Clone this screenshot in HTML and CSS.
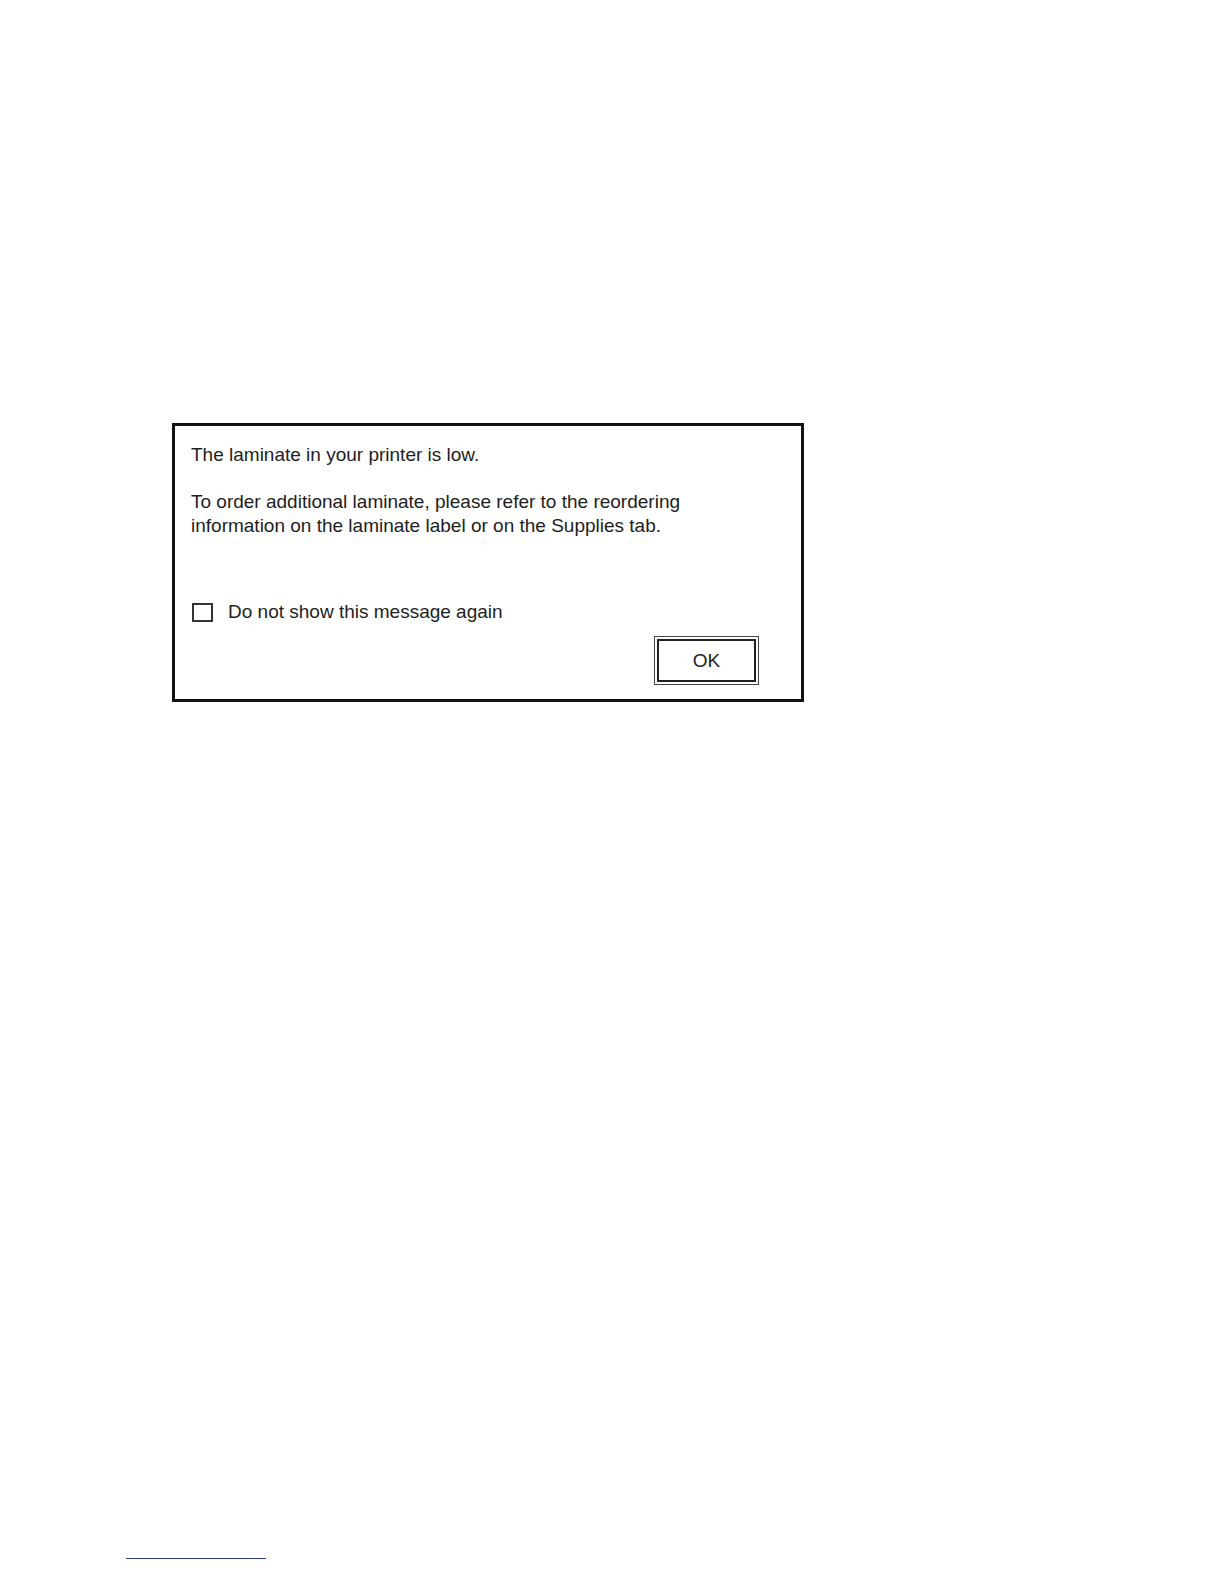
FILE: index.html
```html
<!DOCTYPE html>
<html>
<head>
<meta charset="utf-8">
<link rel="stylesheet" href="styles.css">
</head>
<body>
<div class="dialog">
  <p class="msg">The laminate in your printer is low.</p>
  <p class="msg second">To order additional laminate, please refer to the reordering<br>information on the laminate label or on the Supplies tab.</p>
  <div class="check-row">
    <span class="checkbox"></span>
    <span class="check-label">Do not show this message again</span>
  </div>
  <div class="btn-row">
    <div class="ok-btn"><div class="ok-inner">OK</div></div>
  </div>
</div>
<div class="footer-line"></div>
</body>
</html>
```

FILE: styles.css
```css
html, body {
  margin: 0;
  padding: 0;
  background: #ffffff;
}
body {
  font-family: "Liberation Sans", Arial, sans-serif;
  color: #1e1e1e;
  padding-top: 423px;
}
.dialog {
  margin-left: 172px;
  width: 626px;
  height: 273px;
  border: 3px solid #111;
  box-sizing: content-box;
  display: flex;
  flex-direction: column;
}
.msg {
  margin: 0;
  padding-left: 16px;
  font-size: 19px;
  line-height: 24px;
}
.msg:first-child {
  margin-top: 17px;
}
.second {
  margin-top: 23px;
}
.check-row {
  margin-top: 62px;
  display: flex;
  align-items: center;
  height: 24px;
  padding-left: 17px;
}
.checkbox {
  width: 17px;
  height: 15px;
  border: 2px solid #333;
  display: inline-block;
}
.check-label {
  margin-left: 15px;
  font-size: 19px;
  line-height: 24px;
}
.btn-row {
  display: flex;
  justify-content: flex-end;
  padding-right: 42px;
  margin-top: 12px;
}
.ok-btn {
  width: 99px;
  height: 43px;
  border: 1px solid #444;
  padding: 2px;
  box-sizing: content-box;
  background: #fff;
}
.ok-inner {
  width: 95px;
  height: 39px;
  border: 2px solid #222;
  display: flex;
  align-items: center;
  justify-content: center;
  font-size: 19px;
  color: #222;
}
.footer-line {
  margin-left: 126px;
  margin-top: 856px;
  width: 140px;
  height: 1px;
  background: #2b3a8c;
}
```
